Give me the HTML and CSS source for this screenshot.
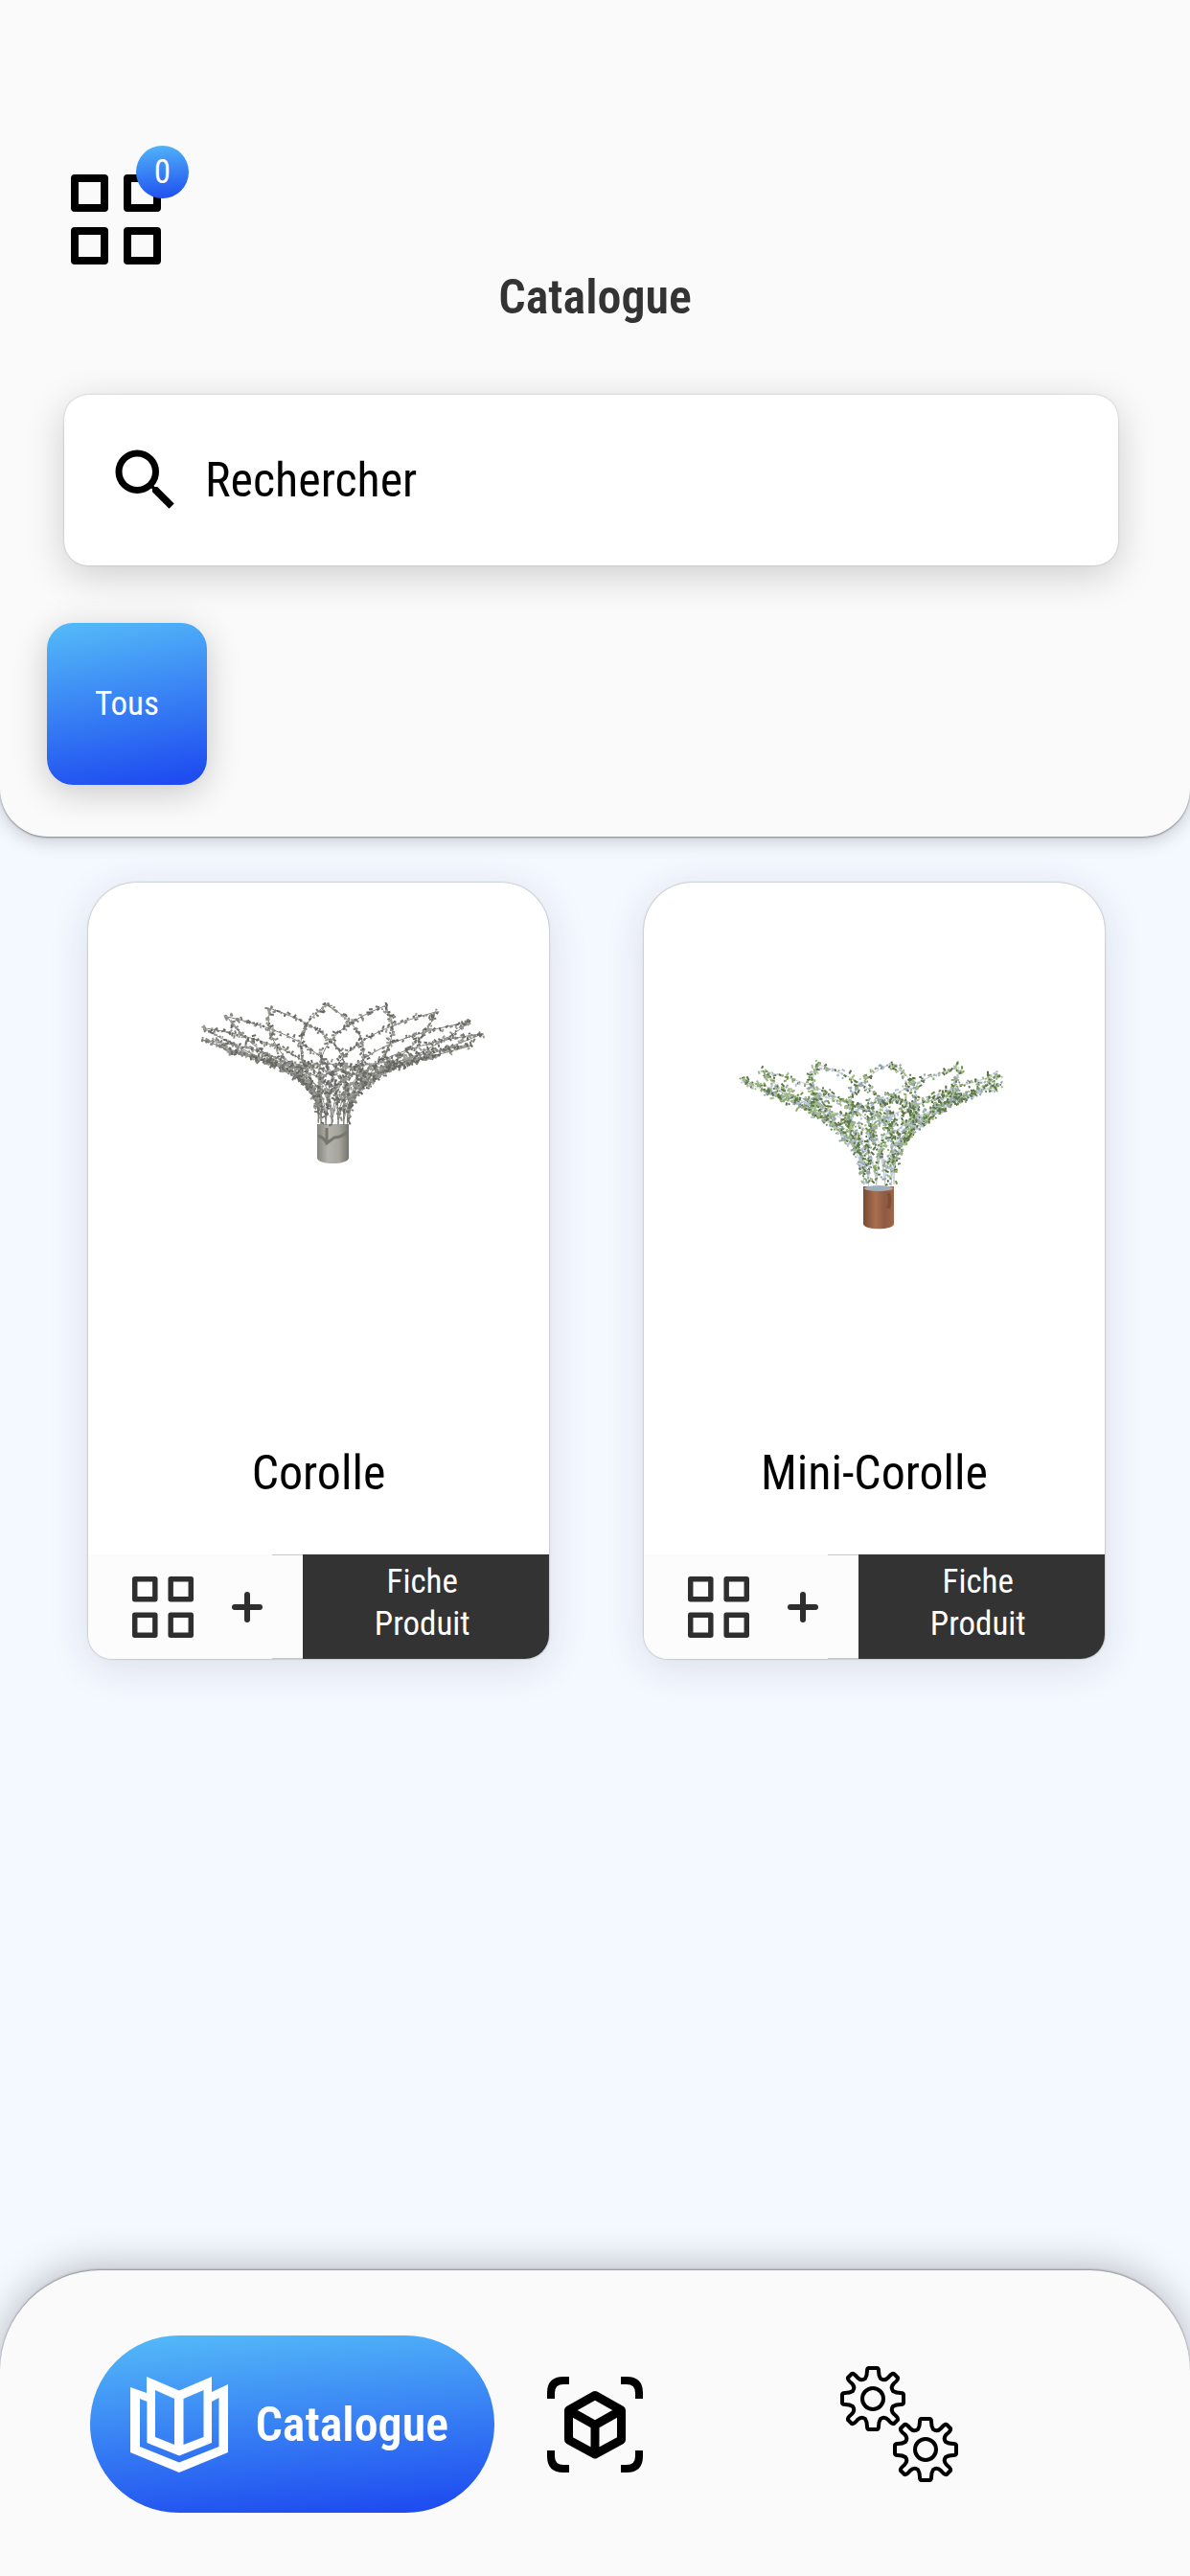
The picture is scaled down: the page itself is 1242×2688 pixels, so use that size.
FILE: index.html
```html
<!DOCTYPE html>
<html lang="fr">
<head>
   <meta charset="utf-8">
   <meta name="viewport" content="width=device-width, initial-scale=1">
   <title>Catalogue</title>
   <link rel="stylesheet" href="styles.css">
</head>
<body>

   <svg class="symbols" aria-hidden="true">
      <symbol id="grid" viewBox="0 0 94 94">
         <g fill="none" stroke="currentColor" stroke-width="8" stroke-linejoin="round">
            <rect x="4" y="4" width="31" height="31"/>
            <rect x="59" y="4" width="31" height="31"/>
            <rect x="4" y="59" width="31" height="31"/>
            <rect x="59" y="59" width="31" height="31"/>
         </g>
      </symbol>
      <symbol id="plus" viewBox="0 0 32 32">
         <path d="M16 3v26M3 16h26" stroke="currentColor" stroke-width="6" stroke-linecap="round"/>
      </symbol>
      <symbol id="gear" viewBox="-34 -34 68 68">
         <g fill="none" stroke="currentColor" stroke-width="4" stroke-linejoin="round">
            <path d="M-8-21Q-6-24-6-29Q-6-32-4-32H4Q6-32 6-29Q6-24 8-21Q12-18 16-22Q20-27 22-26L26-22Q27-20 22-16Q18-12 21-8Q24-6 29-6Q32-6 32-4V4Q32 6 29 6Q24 6 21 8Q18 12 22 16Q27 20 26 22L22 26Q20 27 16 22Q12 18 8 21Q6 24 6 29Q6 32 4 32H-4Q-6 32-6 29Q-6 24-8 21Q-12 18-16 22Q-20 27-22 26L-26 22Q-27 20-22 16Q-18 12-21 8Q-24 6-29 6Q-32 6-32 4V-4Q-32-6-29-6Q-24-6-21-8Q-18-12-22-16Q-27-20-26-22L-22-26Q-20-27-16-22Q-12-18-8-21Z"/>
            <circle r="11"/>
         </g>
      </symbol>
   </svg>

   <header class="header">
      <button class="selection" aria-label="Ma sélection">
         <svg class="selection-icon"><use href="#grid"/></svg>
         <span class="badge">0</span>
      </button>
      <h1>Catalogue</h1>
      <label class="search">
         <svg class="search-icon" viewBox="0 0 24 24" aria-hidden="true">
            <path d="M15.5 14h-.79l-.28-.27A6.47 6.47 0 0 0 16 9.5 6.5 6.5 0 1 0 9.5 16c1.61 0 3.09-.59 4.23-1.57l.27.28v.79l5 4.99L20.49 19l-4.99-5zm-6 0C7.01 14 5 11.99 5 9.5S7.01 5 9.5 5 14 7.01 14 9.5 11.99 14 9.5 14z"/>
         </svg>
         <input type="text" placeholder="Rechercher" aria-label="Rechercher">
      </label>
      <div class="filters">
         <button class="filter">Tous</button>
      </div>
   </header>

   <main class="products">
      <article class="card">
         <svg class="picture" id="corolle" viewBox="0 0 481 580" role="img" aria-label="Corolle">
            <defs>
               <linearGradient id="stone">
                  <stop offset="0" stop-color="#85857f"/>
                  <stop offset=".35" stop-color="#b3b3ac"/>
                  <stop offset=".7" stop-color="#a5a59e"/>
                  <stop offset="1" stop-color="#74746e"/>
               </linearGradient>
            </defs>
            <path d="M239 252V287C239 295 272 295 272 287V252Z" fill="url(#stone)"/>
            <path d="M240 264q6 2 9 8q5-4 8-6q7 0 14-6M249 256v14" fill="none" stroke="#77776f" stroke-width="3"/>
         </svg>
         <h2>Corolle</h2>
         <div class="actions">
            <button class="add" aria-label="Ajouter Corolle">
               <svg class="add-grid"><use href="#grid"/></svg>
               <svg class="add-plus"><use href="#plus"/></svg>
            </button>
            <button class="sheet">Fiche<br>Produit</button>
         </div>
      </article>

      <article class="card">
         <svg class="picture" id="mini-corolle" viewBox="0 0 481 580" role="img" aria-label="Mini-Corolle">
            <defs>
               <linearGradient id="wood">
                  <stop offset="0" stop-color="#774a35"/>
                  <stop offset=".4" stop-color="#ab6f50"/>
                  <stop offset=".7" stop-color="#8e5a40"/>
                  <stop offset="1" stop-color="#a06649"/>
               </linearGradient>
            </defs>
            <path d="M229 317V356C229 363 261 363 261 356V317Z" fill="url(#wood)"/>
            <ellipse cx="245" cy="319" rx="15" ry="3" fill="#9fb0b8"/>
            <path d="M255 324q3 7 0 16" fill="none" stroke="#7d4e38" stroke-width="4"/>
         </svg>
         <h2>Mini-Corolle</h2>
         <div class="actions">
            <button class="add" aria-label="Ajouter Mini-Corolle">
               <svg class="add-grid"><use href="#grid"/></svg>
               <svg class="add-plus"><use href="#plus"/></svg>
            </button>
            <button class="sheet">Fiche<br>Produit</button>
         </div>
      </article>
   </main>

   <nav class="nav">
      <button class="nav-active">
         <svg class="book" viewBox="0 0 102 100" aria-hidden="true">
            <path fill="#fff" fill-rule="evenodd" d="M0 11L17 17V0L51 14.5L85 0V16L102 8V79L51 100L0 79ZM10 23V73L51 89.5L92.5 73V22L85 26V69L51 82.5L17.4 69V26ZM26 14V63L46 71V23ZM55.5 23V71L76.5 63V14Z"/>
         </svg>
         Catalogue
      </button>
      <button class="nav-scan" aria-label="Réalité augmentée">
         <svg class="scan" viewBox="0 0 100 100" aria-hidden="true">
            <g fill="none" stroke="#000" stroke-linejoin="round">
               <path stroke-width="8" d="M4 23V17Q4 4 17 4H23M77 4H83Q96 4 96 17V23M96 77V83Q96 96 83 96H77M23 96H17Q4 96 4 83V77"/>
               <path stroke-width="9" d="M50 19.5L77.5 35V66L50 81L22.5 66V35ZM22.5 35L50 50.5L77.5 35M50 50.5V81"/>
            </g>
         </svg>
      </button>
      <button class="nav-settings" aria-label="Réglages">
         <svg class="gears" viewBox="0 0 122 122" aria-hidden="true">
            <use href="#gear" width="68" height="68"/>
            <use href="#gear" x="55" y="53" width="68" height="68"/>
         </svg>
      </button>
   </nav>

   <script src="script.js"></script>
</body>
</html>
```
FILE: styles.css
```css
* {
   box-sizing: border-box;
}

body {
   margin: 0;
   min-height: 100vh;
   display: flex;
   flex-direction: column;
   background: #f4f8ff;
   font-family: 'Roboto Condensed', Roboto, sans-serif;
   font-size: 50px;
   color: #000;
}

button {
   margin: 0;
   padding: 0;
   border: none;
   background: none;
   font: inherit;
   color: inherit;
   cursor: pointer;
}

svg {
   display: block;
   flex: none;
}

.symbols {
   position: absolute;
   width: 0;
   height: 0;
}

/* header */
.header {
   padding: 152px 67px 54px;
   background: #fafafa;
   border-radius: 0 0 50px 50px;
   box-shadow: 0 1px 2px rgba(0, 0, 0, 0.4), 0 4px 20px rgba(0, 0, 0, 0.2);
}

.selection {
   display: block;
   position: relative;
   margin-left: 7px;
   padding-top: 30px;
}

.selection-icon {
   width: 94px;
   height: 94px;
}

.badge {
   position: absolute;
   top: 0;
   right: -29px;
   width: 55px;
   height: 55px;
   border-radius: 50%;
   background: linear-gradient(175deg, #52b6f8, #1e4cf0);
   color: #fff;
   font-size: 35px;
   line-height: 55px;
   text-align: center;
}

h1 {
   margin: 4px 0 72px;
   font-size: 50px;
   font-weight: 600;
   line-height: 60px;
   text-align: center;
   color: #333;
}

.search {
   display: flex;
   align-items: center;
   gap: 20px;
   height: 178px;
   margin-right: 8px;
   padding: 0 43px;
   background: #fff;
   border-radius: 25px;
   box-shadow: 0 0 2px rgba(0, 0, 0, 0.25), 0 10px 40px rgba(0, 0, 0, 0.18);
}

.search-icon {
   width: 84px;
   height: 84px;
}

.search input {
   flex: 1;
   min-width: 0;
   padding: 0;
   border: none;
   outline: none;
   background: none;
   font: inherit;
}

.search input::placeholder {
   color: #000;
   opacity: 1;
}

.filters {
   display: flex;
   gap: 30px;
   margin: 60px 0 0 -18px;
}

.filter {
   width: 167px;
   height: 169px;
   border-radius: 27px;
   background: linear-gradient(170deg, #52b6f8 5%, #1e4cf0 95%);
   box-shadow: 0 8px 36px rgba(0, 0, 0, 0.2);
   color: #fff;
   font-size: 35px;
}

/* product cards */
.products {
   flex: 1;
   display: grid;
   grid-template-columns: 1fr 1fr;
   align-items: start;
   gap: 99px;
   padding: 48px 89px 48px 92px;
}

.card {
   overflow: hidden;
   background: #fff;
   border-radius: 50px 50px 25px 25px;
   box-shadow: 0 0 2px rgba(0, 0, 0, 0.4), 0 8px 44px rgba(40, 30, 60, 0.12);
}

.picture {
   width: 100%;
   height: auto;
}

h2 {
   margin: 0 0 49px;
   font-size: 50px;
   font-weight: normal;
   line-height: 72px;
   text-align: center;
}

.actions {
   display: grid;
   grid-template-columns: 7fr 8fr;
   height: 109px;
}

.add {
   position: relative;
   display: flex;
   justify-content: center;
   align-items: center;
   gap: 40px;
   padding-left: 4px;
   background: #fcfcfc;
   color: #2e2e2e;
}

/* thin edge next to the dark button */
.add::after {
   content: "";
   position: absolute;
   top: 0;
   right: 0;
   bottom: 0;
   width: 32px;
   border: solid #c8c8c8;
   border-width: 1px 0;
}

.add-grid {
   width: 64px;
   height: 64px;
}

.add-plus {
   width: 32px;
   height: 32px;
}

.sheet {
   padding: 0 8px 8px 0;
   background: #333;
   color: #fff;
   font-size: 35px;
   line-height: 44px;
}

/* bottom bar */
.nav {
   position: sticky;
   bottom: 0;
   display: grid;
   grid-template-columns: 1fr 100px 1fr;
   align-items: center;
   padding: 68px 0 66px;
   background: #fafafa;
   border-radius: 105px 105px 0 0;
   box-shadow: 0 -1px 2px rgba(0, 0, 0, 0.35), 0 -4px 40px rgba(0, 0, 0, 0.25);
}

.nav-active {
   justify-self: end;
   display: flex;
   align-items: center;
   gap: 28px;
   height: 185px;
   margin-right: 55px;
   padding: 0 48px 0 42px;
   border-radius: 93px;
   background: linear-gradient(175deg, #52b6f8 5%, #1e4cf0 95%);
   color: #fff;
   font-weight: 600;
}

.book {
   width: 102px;
   height: 100px;
}

.scan {
   width: 100px;
   height: 100px;
}

.nav-settings {
   justify-self: start;
   margin-left: 206px;
}

.gears {
   width: 122px;
   height: 122px;
   overflow: visible;
}
```
FILE: script.js
```js
var seed = 7;

function random() {
   seed = (seed * 16807) % 2147483647;
   return seed / 2147483647;
}

// point on the funnel: t goes from the pot (0) to the rim (1)
function point(tree, t, angle) {
   var r = 16 + (tree.radius - 16) * Math.pow(t, 1.8);
   return {
      x: tree.x + tree.lean * t + r * Math.cos(angle),
      y: tree.y - tree.height * Math.pow(t, 0.72) + r * tree.tilt * Math.sin(angle)
   };
}

function drawTree(tree) {
   var stems = "";
   var leaves = {};

   for (var i = 0; i < tree.strands * 2; i++) {
      var dir = i % 2 ? 1 : -1;
      var start = Math.floor(i / 2) / tree.strands * Math.PI * 2;

      for (var s = 0; s <= 60; s++) {
         var t = s / 60;
         var p = point(tree, t, start + dir * t * tree.twist);
         stems += (s ? "L" : "M") + p.x.toFixed(1) + " " + p.y.toFixed(1);

         // more leaves on the long outer part of each strand
         var count = tree.density * (0.3 + t * 1.7);
         for (var k = random(); k < count; k++) {
            var color = tree.colors[Math.floor(random() * tree.colors.length)];
            var x = p.x + (random() - 0.5) * tree.spread;
            var y = p.y + (random() - 0.5) * tree.spread;
            var a = random() * Math.PI * 2;
            var size = 1.5 + random() * 3;
            var dx = Math.cos(a) * size;
            var dy = Math.sin(a) * size;
            leaves[color] = (leaves[color] || "") +
               "M" + x.toFixed(1) + " " + y.toFixed(1) +
               "l" + dx.toFixed(1) + " " + dy.toFixed(1);
         }
      }
   }

   var html = `<path d="${stems}" fill="none" stroke="${tree.stem}" stroke-width="1"/>`;
   for (var c in leaves) {
      html += `<path d="${leaves[c]}" fill="none" stroke="${c}" stroke-width="2"/>`;
   }
   document.getElementById(tree.id).insertAdjacentHTML("beforeend", html);
}

drawTree({
   id: "corolle", x: 256, y: 250, lean: 8, radius: 147, height: 92, tilt: 0.21,
   strands: 15, twist: 1.26, density: 0.9, spread: 4, stem: "#80807b",
   colors: ["#666662", "#7a7a75", "#8b8b86", "#9b9b96", "#72726e"]
});

drawTree({
   id: "mini-corolle", x: 245, y: 315, lean: -6, radius: 137, height: 109, tilt: 0.13,
   strands: 11, twist: 1.43, density: 1.3, spread: 7, stem: "#c3cbd6",
   colors: ["#5c7549", "#6f8f4d", "#8cab66", "#b4c1d6", "#587044", "#95a6ad", "#a3bc86"]
});
```
